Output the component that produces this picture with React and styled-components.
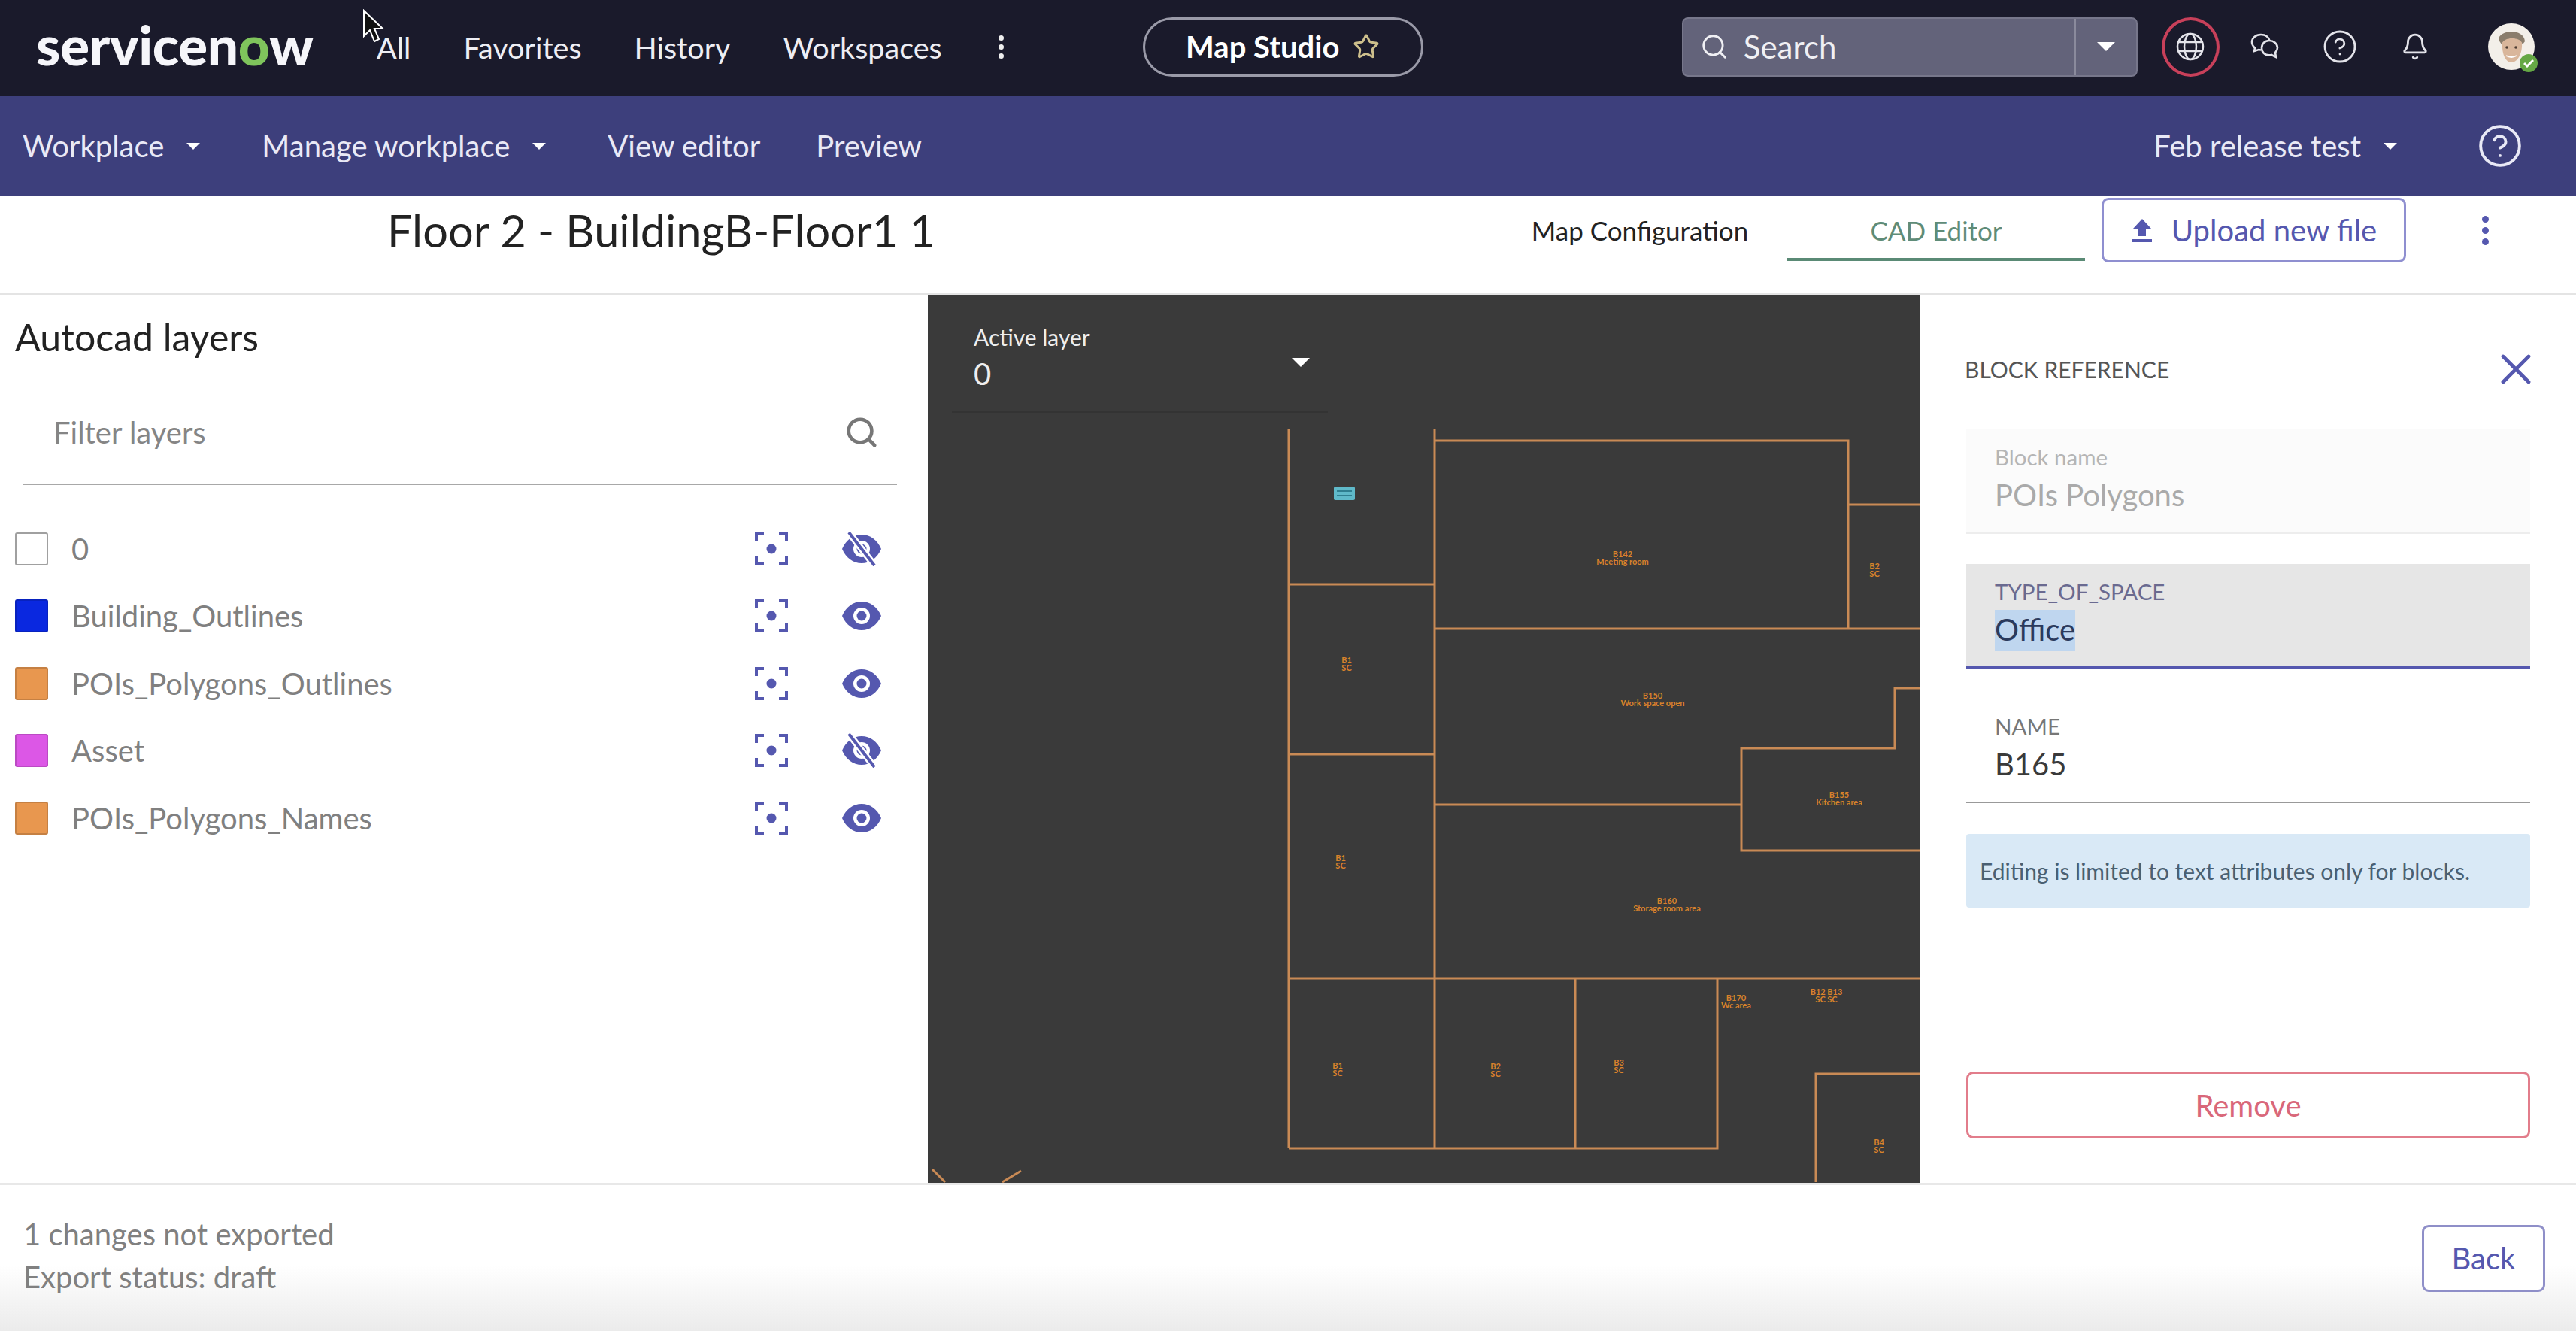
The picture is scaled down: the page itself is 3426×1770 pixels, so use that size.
import styled, { createGlobalStyle } from "styled-components";
import { Search, Star, CircleHelp, Bell, X } from "lucide-react";

const GlobalStyle = createGlobalStyle`
    html, body {
        margin: 0;
        padding: 0;
        background: #fff;
    }
    * {
        box-sizing: border-box;
    }
`;

const Page = styled.div`
    position: relative;
    width: 3426px;
    height: 1770px;
    display: flex;
    flex-direction: column;
    overflow: hidden;
    font-family: Lato, "Liberation Sans", sans-serif;
`;

const TopBar = styled.header`
    height: 127px;
    flex: none;
    display: flex;
    align-items: center;
    padding-bottom: 3px;
    background: #1a1a2b;
    color: #fff;
`;

const Logo = styled.div`
    margin-left: 48px;
    width: 372px;
    font-size: 73px;
    font-weight: 900;
    letter-spacing: -0.4px;
    line-height: 1;
    color: #f6f6fa;
    white-space: nowrap;
    position: relative;
    top: -3px;

    span {
        color: #7fc45c;
    }
`;

const TopNav = styled.nav`
    margin-left: 81px;
    display: flex;
    align-items: center;
    gap: 70px;
    font-size: 39.6px;
    color: #eeeef4;
`;

const Kebab = styled.span`
    display: flex;
    flex-direction: column;
    gap: ${(p) => p.$gap}px;
    margin-left: ${(p) => p.$left || 0}px;

    i {
        width: ${(p) => p.$dot}px;
        height: ${(p) => p.$dot}px;
        border-radius: 50%;
        background: ${(p) => p.$color};
    }
`;

const AppPill = styled.div`
    margin-left: 185px;
    width: 373px;
    height: 79px;
    display: flex;
    align-items: center;
    justify-content: center;
    gap: 18px;
    border: 3px solid #9a9aa8;
    border-radius: 40px;
    font-size: 40px;
    font-weight: 700;
    color: #fff;

    svg {
        color: #cdbf8c;
    }
`;

const SearchBox = styled.div`
    margin-left: 344px;
    width: 606px;
    height: 79px;
    display: flex;
    align-items: center;
    background: #63637a;
    border: 2px solid #77778b;
    border-radius: 8px;
    color: #f0f0f4;
    font-size: 42px;
`;

const SearchField = styled.div`
    flex: 1;
    height: 100%;
    display: flex;
    align-items: center;
    gap: 20px;
    padding-left: 22px;
    border-right: 2px solid #8a8a9c;
`;

const SearchCaret = styled.div`
    width: 80px;
    display: flex;
    justify-content: center;
`;

const Caret = styled.span`
    width: 0;
    height: 0;
    border-left: ${(p) => p.$size}px solid transparent;
    border-right: ${(p) => p.$size}px solid transparent;
    border-top: ${(p) => p.$size}px solid ${(p) => p.$color || "#fff"};
`;

const GlobeRing = styled.div`
    margin-left: 32px;
    width: 77px;
    height: 79px;
    flex: none;
    display: flex;
    align-items: center;
    justify-content: center;
    border: 4px solid #c8405a;
    border-radius: 50%;
`;

const TopIcon = styled.span`
    display: flex;
    margin-left: ${(p) => p.$left}px;
    color: #e4e4ea;
`;

const Avatar = styled.div`
    position: relative;
    margin-left: 78px;
    width: 62px;
    height: 62px;
    flex: none;
`;

const AvatarBadge = styled.span`
    position: absolute;
    right: -4px;
    bottom: -3px;
    width: 24px;
    height: 24px;
    display: flex;
    align-items: center;
    justify-content: center;
    border-radius: 50%;
    background: #65a845;
`;

const SubBar = styled.div`
    height: 134px;
    flex: none;
    display: flex;
    align-items: center;
    padding: 0 70px 0 30px;
    background: #3d3f7c;
    color: #e9e9f6;
    font-size: 40px;
`;

const SubItem = styled.div`
    display: flex;
    align-items: center;
    gap: 30px;
    margin-right: ${(p) => p.$gap}px;
`;

const SubSpacer = styled.div`
    flex: 1;
`;

const HeaderRow = styled.div`
    height: 131px;
    flex: none;
    display: flex;
    align-items: center;
    padding: 0 0 38px 515px;
    border-bottom: 3px solid #e4e4e4;
    background: #fff;
`;

const Title = styled.h1`
    margin: 0;
    width: 1470px;
    font-size: 59.5px;
    font-weight: 400;
    color: #222;
    white-space: nowrap;
`;

const Tab = styled.div`
    width: ${(p) => p.$width}px;
    height: 81px;
    padding-top: 4px;
    display: flex;
    align-items: center;
    justify-content: center;
    font-size: 35px;
    color: ${(p) => (p.$active ? "#5f8c78" : "#222")};
    border-bottom: 4px solid ${(p) => (p.$active ? "#5a8a75" : "transparent")};
`;

const UploadButton = styled.button`
    margin-left: 22px;
    width: 405px;
    height: 86px;
    display: flex;
    align-items: center;
    justify-content: center;
    gap: 24px;
    background: #fff;
    border: 3px solid #8f8fd0;
    border-radius: 9px;
    color: #5558af;
    font-family: inherit;
    font-size: 40px;
`;

const Body = styled.main`
    height: 1181px;
    flex: none;
    display: grid;
    grid-template-columns: 1234px 1320px 872px;
`;

const LayersPanel = styled.aside`
    background: #fff;
    padding: 27px 41px 0 20px;
`;

const PanelTitle = styled.h2`
    margin: 0;
    font-size: 50px;
    font-weight: 400;
    color: #222;
    line-height: 58px;
`;

const FilterRow = styled.div`
    margin: 30px 0 40px 10px;
    height: 138px;
    display: flex;
    align-items: center;
    justify-content: space-between;
    padding: 0 24px 0 41px;
    border-bottom: 2px solid #a8a8a8;
    font-size: 40px;
    color: #858585;

    svg {
        color: #777;
    }
`;

const LayerRow = styled.div`
    height: 89.5px;
    display: flex;
    align-items: center;
`;

const Swatch = styled.span`
    width: 44px;
    height: 44px;
    flex: none;
    background: ${(p) => p.$color};
    border: 2px solid ${(p) => (p.$color === "#fff" ? "#a0a0a0" : "rgba(0, 0, 0, 0.15)")};
    border-radius: 3px;
`;

const LayerName = styled.span`
    flex: 1;
    margin-left: 31px;
    font-size: 40px;
    color: #808080;
`;

const LayerActions = styled.span`
    display: flex;
    align-items: center;
    gap: 71px;
    padding-right: 20px;
`;

const MapArea = styled.section`
    position: relative;
    background: #3a3a3a;
    overflow: hidden;
`;

const MapDrawing = styled.svg`
    position: absolute;
    inset: 0;
    width: 100%;
    height: 100%;
`;

const ActiveLayer = styled.div`
    position: absolute;
    left: 32px;
    top: 36px;
    width: 500px;
    height: 121px;
    padding-left: 29px;
    border-bottom: 2px solid #333;
    color: #eee;
`;

const ActiveLabel = styled.div`
    font-size: 30px;
    line-height: 40px;
`;

const ActiveValue = styled.div`
    font-size: 40px;
    line-height: 58px;
`;

const ActiveCaret = styled.span`
    position: absolute;
    right: 24px;
    top: 60px;
`;

const DetailsPanel = styled.aside`
    display: flex;
    flex-direction: column;
    padding: 60px 61px 59px 61px;
    background: #fff;
`;

const DetailsHeader = styled.div`
    display: flex;
    align-items: center;
    justify-content: space-between;
    height: 78px;
    margin-left: -2px;
    font-size: 30px;
    color: #555;

    svg {
        margin-right: -15px;
        color: #5558af;
    }
`;

const Field = styled.div`
    margin-top: ${(p) => p.$top}px;
    height: 139px;
    padding: 18px 0 0 38px;
    background: ${(p) => (p.$focused ? "#e6e6e6" : p.$disabled ? "#fbfbfb" : "transparent")};
    border-bottom: ${(p) => (p.$focused ? "3px solid #5558af" : p.$disabled ? "2px solid #ededed" : "2px solid #999")};
`;

const FieldLabel = styled.div`
    font-size: 29.5px;
    line-height: 38px;
    color: ${(p) => (p.$disabled ? "#b5b5b5" : p.$focused ? "#6a6a90" : "#777")};
`;

const FieldValue = styled.div`
    margin-top: 5px;
    font-size: 40px;
    line-height: 52px;
    color: ${(p) => (p.$disabled ? "#aaa" : "#3a3a3a")};

    mark {
        display: inline-block;
        height: 55px;
        background: #bfd6ef;
        color: #2b3a5c;
    }
`;

const InfoNote = styled.div`
    margin-top: 41px;
    height: 98px;
    display: flex;
    align-items: center;
    padding-left: 18px;
    background: #d9e9f6;
    border-radius: 4px;
    font-size: 30px;
    color: #4a6072;
`;

const RemoveButton = styled.button`
    margin-top: auto;
    height: 89px;
    background: #fff;
    border: 3px solid #e27d8b;
    border-radius: 9px;
    color: #d9677a;
    font-family: inherit;
    font-size: 40px;
`;

const Footer = styled.footer`
    flex: 1;
    display: flex;
    align-items: center;
    justify-content: space-between;
    padding: 0 41px 0 31px;
    border-top: 3px solid #e8e8e8;
    background: linear-gradient(#fff 0%, #fff 55%, #ebebeb 100%);
`;

const Status = styled.div`
    margin-bottom: 6px;
    font-size: 40px;
    line-height: 57px;
    color: #808080;
`;

const BackButton = styled.button`
    width: 164px;
    height: 89px;
    background: #fff;
    border: 3px solid #8f8fc8;
    border-radius: 9px;
    color: #5558af;
    font-family: inherit;
    font-size: 40px;
`;

const Pointer = styled.svg`
    position: absolute;
    left: 482px;
    top: 12px;
`;

const LAYERS = [
    { name: "0", color: "#fff", hidden: true },
    { name: "Building_Outlines", color: "#0a28e0" },
    { name: "POIs_Polygons_Outlines", color: "#e8974f" },
    { name: "Asset", color: "#dc57e6", hidden: true },
    { name: "POIs_Polygons_Names", color: "#e8974f" },
];

// floor plan segments, in px relative to the map's top left corner
const WALLS = [
    "M480 179V1135",
    "M674 179V1135",
    "M674 194H1224V444",
    "M1224 279H1320",
    "M480 385H674",
    "M674 444H1320",
    "M480 611H674",
    "M1320 523H1286V603H1082V739H1320",
    "M1082 678H674",
    "M480 909H1320",
    "M480 1135H1050V909",
    "M861 909V1135",
    "M1320 1036H1181V1180",
    "M6 1163L23 1180",
    "M99 1180L124 1165",
];

const LABELS = [
    { x: 924, y: 349, lines: ["B142", "Meeting room"] },
    { x: 1259, y: 365, lines: ["B2", "SC"] },
    { x: 557, y: 490, lines: ["B1", "SC"] },
    { x: 964, y: 537, lines: ["B150", "Work space open"] },
    { x: 1212, y: 669, lines: ["B155", "Kitchen area"] },
    { x: 549, y: 753, lines: ["B1", "SC"] },
    { x: 983, y: 810, lines: ["B160", "Storage room area"] },
    { x: 1075, y: 939, lines: ["B170", "Wc area"] },
    { x: 1195, y: 931, lines: ["B12 B13", "SC SC"] },
    { x: 545, y: 1029, lines: ["B1", "SC"] },
    { x: 755, y: 1030, lines: ["B2", "SC"] },
    { x: 919, y: 1025, lines: ["B3", "SC"] },
    { x: 1265, y: 1131, lines: ["B4", "SC"] },
];

function EyeIcon({ off }) {
    return (
        <svg width="54" height="46" viewBox="0 0 54 46">
            <path
                d="M1 23C6 11 16 4 27 4s21 7 26 19C48 35 38 42 27 42S6 35 1 23Z"
                fill="#5558af"
            />
            <circle cx="27" cy="23" r="11" fill="#fff" />
            <circle cx="27" cy="23" r="6.500" fill="#5558af" />
            {off && <path d="M10 1L44 45" stroke="#fff" strokeWidth="9" />}
            {off && <path d="M10 1L44 45" stroke="#5558af" strokeWidth="4" />}
        </svg>
    );
}

function FocusIcon() {
    return (
        <svg width="44" height="46" viewBox="0 0 44 46" fill="none" stroke="#5558af" strokeWidth="4">
            <path d="M2 13V3H12M32 3H42V13M42 33V43H32M12 43H2V33" />
            <circle cx="22" cy="23" r="6.500" fill="#5558af" stroke="none" />
        </svg>
    );
}

function GlobeIcon() {
    return (
        <svg width="38" height="38" viewBox="0 0 38 38" fill="none" stroke="#e4e4ea" strokeWidth="2.5">
            <circle cx="19" cy="19" r="17" />
            <ellipse cx="19" cy="19" rx="8" ry="17" />
            <path d="M3 13H35M3 25H35" />
        </svg>
    );
}

function ChatIcon() {
    return (
        <svg width="38" height="36" viewBox="0 0 38 36" fill="none" stroke="#e4e4ea" strokeWidth="2.6">
            <path d="M14 2C7 2 2 6.500 2 12c0 3.500 2 6 4 8l-1 4 6-2c1 .3 2 .4 3 .5" />
            <path d="M14 2c6 0 10 3 11.500 8" />
            <path d="M25 10c6 0 11 4 11 9.500 0 3-1.500 5-3 6.500l1 6-6-3c-1 .3-2 .4-3 .4-6 0-10-4-10-9.500S19 10 25 10Z" />
        </svg>
    );
}

function UploadIcon() {
    return (
        <svg width="30" height="34" viewBox="0 0 30 34" fill="#5558af">
            <path d="M15 2L27 15H20V25H10V15H3Z" />
            <rect x="2" y="29" width="26" height="4" />
        </svg>
    );
}

function AvatarFace() {
    return (
        <svg width="62" height="62" viewBox="0 0 62 62">
            <circle cx="31" cy="31" r="31" fill="#f3efe9" />
            <path d="M14 22C14 8 48 6 49 24L46 28C42 18 22 18 18 28Z" fill="#8a7d6c" />
            <path d="M19 26C22 18 42 18 45 26C46 42 38 52 31 52S18 42 19 26Z" fill="#d9b69b" />
            <path d="M24 43Q31 47 38 43" stroke="#fff" strokeWidth="2" fill="none" />
            <circle cx="25" cy="32" r="1.800" fill="#4a3a30" />
            <circle cx="37" cy="32" r="1.800" fill="#4a3a30" />
        </svg>
    );
}

function App() {
    return (
        <Page>
            <GlobalStyle />
            <TopBar>
                <Logo>
                    servicen<span>o</span>w
                </Logo>
                <TopNav>
                    <span>All</span>
                    <span>Favorites</span>
                    <span>History</span>
                    <span>Workspaces</span>
                </TopNav>
                <Kebab $left={75} $color="#eee" $dot={7} $gap={5}>
                    <i />
                    <i />
                    <i />
                </Kebab>
                <AppPill>
                    Map Studio
                    <Star size={36} strokeWidth={2} />
                </AppPill>
                <SearchBox>
                    <SearchField>
                        <Search size={38} strokeWidth={1.8} />
                        Search
                    </SearchField>
                    <SearchCaret>
                        <Caret $size={12} />
                    </SearchCaret>
                </SearchBox>
                <GlobeRing>
                    <GlobeIcon />
                </GlobeRing>
                <TopIcon $left={41}>
                    <ChatIcon />
                </TopIcon>
                <TopIcon $left={57}>
                    <CircleHelp size={48} strokeWidth={1.4} />
                </TopIcon>
                <TopIcon $left={57}>
                    <Bell size={38} strokeWidth={1.8} />
                </TopIcon>
                <Avatar>
                    <AvatarFace />
                    <AvatarBadge>
                        <svg width="14" height="12" viewBox="0 0 14 12" fill="none" stroke="#fff" strokeWidth="3">
                            <path d="M1 6L5 10L13 2" />
                        </svg>
                    </AvatarBadge>
                </Avatar>
            </TopBar>

            <SubBar>
                <SubItem $gap={82}>
                    Workplace
                    <Caret $size={9} />
                </SubItem>
                <SubItem $gap={82}>
                    Manage workplace
                    <Caret $size={9} />
                </SubItem>
                <SubItem $gap={74}>View editor</SubItem>
                <SubItem $gap={0}>Preview</SubItem>
                <SubSpacer />
                <SubItem $gap={106}>
                    Feb release test
                    <Caret $size={9} />
                </SubItem>
                <CircleHelp size={62} strokeWidth={1.5} />
            </SubBar>

            <HeaderRow>
                <Title>Floor 2 - BuildingB-Floor1 1</Title>
                <Tab $width={392}>Map Configuration</Tab>
                <Tab $width={396} $active>
                    CAD Editor
                </Tab>
                <UploadButton>
                    <UploadIcon />
                    Upload new file
                </UploadButton>
                <Kebab $left={101} $color="#5558af" $dot={9} $gap={6}>
                    <i />
                    <i />
                    <i />
                </Kebab>
            </HeaderRow>

            <Body>
                <LayersPanel>
                    <PanelTitle>Autocad layers</PanelTitle>
                    <FilterRow>
                        Filter layers
                        <Search size={46} strokeWidth={2.4} />
                    </FilterRow>
                    {LAYERS.map((layer) => (
                        <LayerRow key={layer.name}>
                            <Swatch $color={layer.color} />
                            <LayerName>{layer.name}</LayerName>
                            <LayerActions>
                                <FocusIcon />
                                <EyeIcon off={layer.hidden} />
                            </LayerActions>
                        </LayerRow>
                    ))}
                </LayersPanel>

                <MapArea>
                    <MapDrawing viewBox="0 0 1320 1181" fill="none">
                        {WALLS.map((d) => (
                            <path key={d} d={d} stroke="#c98a55" strokeWidth="3" />
                        ))}
                        <rect x="540" y="255" width="28" height="18" rx="2" fill="#5fb9c9" />
                        <path d="M544 261H564M544 267H564" stroke="#2f7f90" strokeWidth="2" />
                        {LABELS.map((label) => (
                            <text
                                key={label.x + "-" + label.y}
                                x={label.x}
                                y={label.y}
                                fontFamily="Lato, sans-serif"
                                fontSize="11"
                                fontWeight="700"
                                textAnchor="middle"
                                fill="#d9822b"
                            >
                                <tspan x={label.x}>{label.lines[0]}</tspan>
                                <tspan x={label.x} dy="10">
                                    {label.lines[1]}
                                </tspan>
                            </text>
                        ))}
                    </MapDrawing>
                    <ActiveLayer>
                        <ActiveLabel>Active layer</ActiveLabel>
                        <ActiveValue>0</ActiveValue>
                        <ActiveCaret>
                            <Caret $size={12} />
                        </ActiveCaret>
                    </ActiveLayer>
                </MapArea>

                <DetailsPanel>
                    <DetailsHeader>
                        BLOCK REFERENCE
                        <X size={68} strokeWidth={1.7} />
                    </DetailsHeader>
                    <Field $top={41} $disabled>
                        <FieldLabel $disabled>Block name</FieldLabel>
                        <FieldValue $disabled>POIs Polygons</FieldValue>
                    </Field>
                    <Field $top={40} $focused>
                        <FieldLabel $focused>TYPE_OF_SPACE</FieldLabel>
                        <FieldValue>
                            <mark>Office</mark>
                        </FieldValue>
                    </Field>
                    <Field $top={40}>
                        <FieldLabel>NAME</FieldLabel>
                        <FieldValue>B165</FieldValue>
                    </Field>
                    <InfoNote>Editing is limited to text attributes only for blocks.</InfoNote>
                    <RemoveButton>Remove</RemoveButton>
                </DetailsPanel>
            </Body>

            <Footer>
                <Status>
                    <div>1 changes not exported</div>
                    <div>Export status: draft</div>
                </Status>
                <BackButton>Back</BackButton>
            </Footer>

            <Pointer width="30" height="46" viewBox="0 0 30 46">
                <path d="M2 2V36L10 28L16 43L22 40L16 26H27Z" fill="#111" stroke="#fff" strokeWidth="2" />
            </Pointer>
        </Page>
    );
}

export default App;
